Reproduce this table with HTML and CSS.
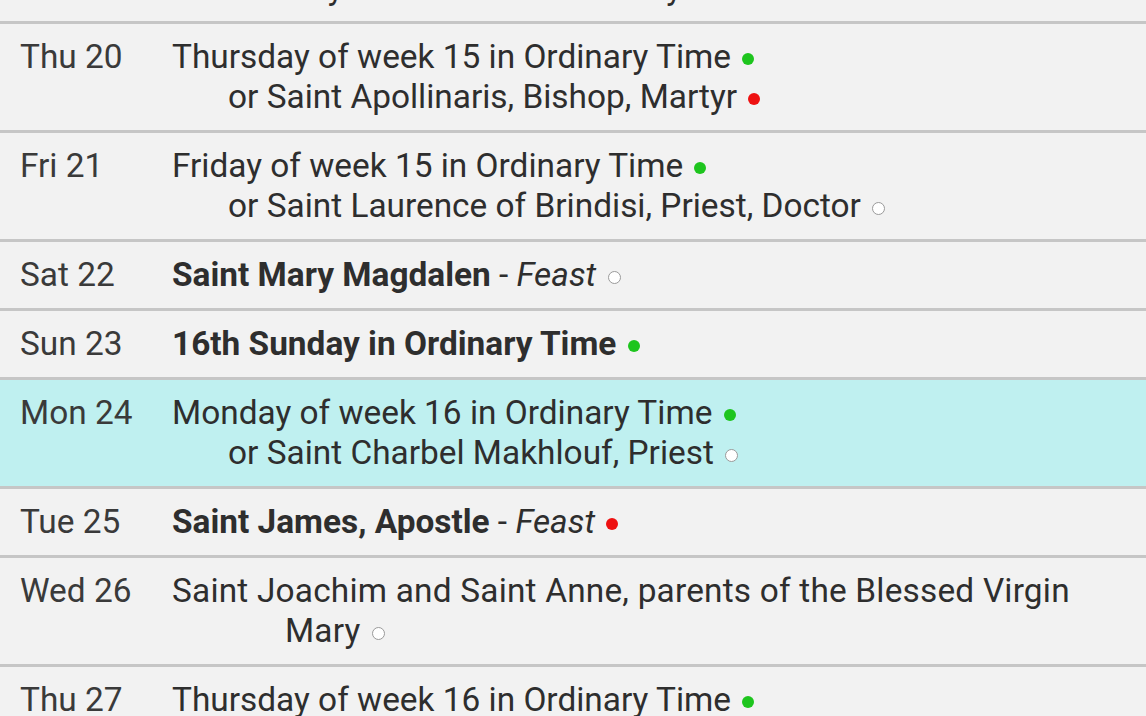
FILE: index.html
```html
<!DOCTYPE html>
<html>
<head>
<meta charset="utf-8">
<link rel="stylesheet" href="styles.css">
</head>
<body>
<div class="list">
  <div class="row">
    <div class="date">Wed 19</div>
    <div class="desc"><div class="main">Wednesday of week 15 in Ordinary Time <span class="dot green"></span></div></div>
  </div>
  <div class="row">
    <div class="date">Thu 20</div>
    <div class="desc">
      <div class="main">Thursday of week 15 in Ordinary Time <span class="dot green"></span></div>
      <div class="alt">or Saint Apollinaris, Bishop, Martyr <span class="dot red"></span></div>
    </div>
  </div>
  <div class="row">
    <div class="date">Fri 21</div>
    <div class="desc">
      <div class="main">Friday of week 15 in Ordinary Time <span class="dot green"></span></div>
      <div class="alt">or Saint Laurence of Brindisi, Priest, Doctor <span class="dot white"></span></div>
    </div>
  </div>
  <div class="row">
    <div class="date">Sat 22</div>
    <div class="desc"><div class="main"><b>Saint Mary Magdalen</b> - <i>Feast</i> <span class="dot white"></span></div></div>
  </div>
  <div class="row">
    <div class="date">Sun 23</div>
    <div class="desc"><div class="main"><b>16th Sunday in Ordinary Time</b> <span class="dot green"></span></div></div>
  </div>
  <div class="row today">
    <div class="date">Mon 24</div>
    <div class="desc">
      <div class="main">Monday of week 16 in Ordinary Time <span class="dot green"></span></div>
      <div class="alt">or Saint Charbel Makhlouf, Priest <span class="dot white"></span></div>
    </div>
  </div>
  <div class="row">
    <div class="date">Tue 25</div>
    <div class="desc"><div class="main"><b>Saint James, Apostle</b> - <i>Feast</i> <span class="dot red"></span></div></div>
  </div>
  <div class="row">
    <div class="date">Wed 26</div>
    <div class="desc"><div class="main wide">Saint Joachim and Saint Anne, parents of the Blessed Virgin Mary <span class="dot white"></span></div></div>
  </div>
  <div class="row">
    <div class="date">Thu 27</div>
    <div class="desc"><div class="main">Thursday of week 16 in Ordinary Time <span class="dot green"></span></div></div>
  </div>
</div>
</body>
</html>
```

FILE: styles.css
```css
html, body {
  margin: 0;
  padding: 0;
  background: #f2f2f2;
  overflow: hidden;
}
body {
  font-family: Roboto, "Liberation Sans", sans-serif;
  font-size: 33.4px;
  color: #2e2e2e;
}
.list {
  margin-top: -45px;
  display: flex;
  flex-direction: column;
}
.row {
  display: flex;
  padding: 13px 40px 13px 20px;
  line-height: 40px;
  border-bottom: 3px solid #c6c6c6;
  background: #f2f2f2;
}
.row.today {
  background: #bff0f0;
}
.date {
  width: 152px;
  flex: none;
  color: #3a3a3a;
}
.desc {
  flex: 1;
  min-width: 0;
}
.main {
  padding-left: 113px;
  text-indent: -113px;
}
.main.wide {
  letter-spacing: 0.2px;
}
.alt {
  padding-left: 56px;
}
b { font-weight: 700; }
.dot {
  display: inline-block;
  width: 12px;
  height: 12px;
  border-radius: 50%;
  vertical-align: 3px;
  box-sizing: border-box;
  margin-left: 3px;
}
.dot.green { background: #1ec51e; }
.dot.red { background: #ee1111; }
.dot.white { background: #ffffff; border: 1.5px solid #9a9a9a; width: 13px; height: 13px; vertical-align: 2px; }
```
